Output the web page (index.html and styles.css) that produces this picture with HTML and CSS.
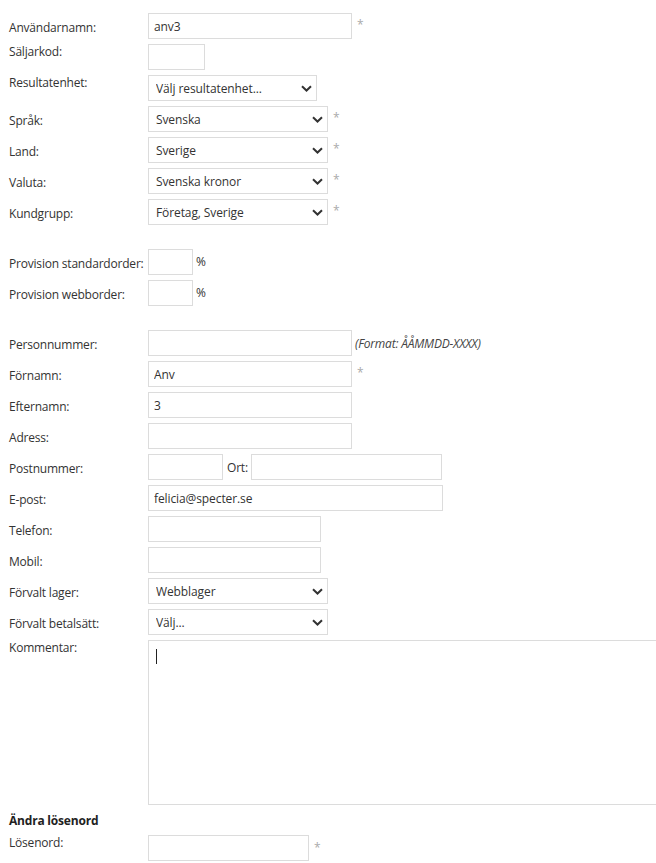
FILE: index.html
```html
<!DOCTYPE html>
<html lang="sv">
<head>
    <meta charset="UTF-8">
    <meta name="viewport" content="width=device-width, initial-scale=1.0">
    <title>Redigera användare</title>
    <link rel="stylesheet" href="styles.css">
</head>
<body>
    <form class="user-form">
        <div class="row">
            <label>Användarnamn:</label>
            <input type="text" class="w-wide" value="anv3">
            <span class="req">*</span>
        </div>
        <div class="row top">
            <label>Säljarkod:</label>
            <input type="text" class="w-code">
        </div>
        <div class="row top">
            <label>Resultatenhet:</label>
            <span class="select-wrap">
                <select class="w-unit"><option>Välj resultatenhet...</option></select>
                <svg class="chevron" width="11" height="7" viewBox="0 0 11 7"><path d="M1 1.2l4.5 4.3 4.5-4.3" fill="none" stroke="#333" stroke-width="2"/></svg>
            </span>
        </div>
        <div class="row">
            <label>Språk:</label>
            <span class="select-wrap">
                <select class="w-select"><option>Svenska</option></select>
                <svg class="chevron" width="11" height="7" viewBox="0 0 11 7"><path d="M1 1.2l4.5 4.3 4.5-4.3" fill="none" stroke="#333" stroke-width="2"/></svg>
            </span>
            <span class="req">*</span>
        </div>
        <div class="row">
            <label>Land:</label>
            <span class="select-wrap">
                <select class="w-select"><option>Sverige</option></select>
                <svg class="chevron" width="11" height="7" viewBox="0 0 11 7"><path d="M1 1.2l4.5 4.3 4.5-4.3" fill="none" stroke="#333" stroke-width="2"/></svg>
            </span>
            <span class="req">*</span>
        </div>
        <div class="row">
            <label>Valuta:</label>
            <span class="select-wrap">
                <select class="w-select"><option>Svenska kronor</option></select>
                <svg class="chevron" width="11" height="7" viewBox="0 0 11 7"><path d="M1 1.2l4.5 4.3 4.5-4.3" fill="none" stroke="#333" stroke-width="2"/></svg>
            </span>
            <span class="req">*</span>
        </div>
        <div class="row">
            <label>Kundgrupp:</label>
            <span class="select-wrap">
                <select class="w-select"><option>Företag, Sverige</option></select>
                <svg class="chevron" width="11" height="7" viewBox="0 0 11 7"><path d="M1 1.2l4.5 4.3 4.5-4.3" fill="none" stroke="#333" stroke-width="2"/></svg>
            </span>
            <span class="req">*</span>
        </div>

        <div class="spacer"></div>

        <div class="row">
            <label>Provision standardorder:</label>
            <input type="text" class="w-pct">
            <span class="unit">%</span>
        </div>
        <div class="row">
            <label>Provision webborder:</label>
            <input type="text" class="w-pct">
            <span class="unit">%</span>
        </div>

        <div class="spacer"></div>

        <div class="row">
            <label>Personnummer:</label>
            <input type="text" class="w-wide">
            <span class="hint">(Format: ÅÅMMDD-XXXX)</span>
        </div>
        <div class="row">
            <label>Förnamn:</label>
            <input type="text" class="w-wide" value="Anv">
            <span class="req">*</span>
        </div>
        <div class="row">
            <label>Efternamn:</label>
            <input type="text" class="w-wide" value="3">
        </div>
        <div class="row">
            <label>Adress:</label>
            <input type="text" class="w-wide">
        </div>
        <div class="row">
            <label>Postnummer:</label>
            <input type="text" class="w-zip">
            <span class="inline-label">Ort:</span>
            <input type="text" class="w-city">
        </div>
        <div class="row">
            <label>E-post:</label>
            <input type="text" class="w-mail" value="felicia@specter.se">
        </div>
        <div class="row">
            <label>Telefon:</label>
            <input type="text" class="w-phone">
        </div>
        <div class="row">
            <label>Mobil:</label>
            <input type="text" class="w-phone">
        </div>
        <div class="row">
            <label>Förvalt lager:</label>
            <span class="select-wrap">
                <select class="w-select"><option>Webblager</option></select>
                <svg class="chevron" width="11" height="7" viewBox="0 0 11 7"><path d="M1 1.2l4.5 4.3 4.5-4.3" fill="none" stroke="#333" stroke-width="2"/></svg>
            </span>
        </div>
        <div class="row">
            <label>Förvalt betalsätt:</label>
            <span class="select-wrap">
                <select class="w-select"><option>Välj...</option></select>
                <svg class="chevron" width="11" height="7" viewBox="0 0 11 7"><path d="M1 1.2l4.5 4.3 4.5-4.3" fill="none" stroke="#333" stroke-width="2"/></svg>
            </span>
        </div>
        <div class="row top">
            <label>Kommentar:</label>
            <span class="area-wrap">
                <textarea class="comment"></textarea>
                <span class="caret"></span>
            </span>
        </div>

        <h4>Ändra lösenord</h4>
        <div class="row top">
            <label>Lösenord:</label>
            <input type="password" class="w-pass">
            <span class="req">*</span>
        </div>
    </form>
</body>
</html>
```

FILE: styles.css
```css
html, body {
    overflow-x: hidden;
}
body {
    margin: 0;
    font-family: "Open Sans", Arial, sans-serif;
    font-size: 12px;
    letter-spacing: -0.2px;
    color: #333;
    background-color: #fff;
}
.user-form {
    padding: 13px 0 0 9px;
}
.row {
    display: flex;
    align-items: center;
    margin-bottom: 5px;
}
.row.top {
    align-items: flex-start;
}
.row label {
    width: 139px;
    flex-shrink: 0;
    line-height: 16px;
    padding-top: 4px;
    white-space: nowrap;
}
.row.top label {
    padding-top: 0;
}
input, select, textarea {
    box-sizing: border-box;
    height: 26px;
    border: 1px solid #dcdcdc;
    font-family: "Open Sans", Arial, sans-serif;
    font-size: 12px;
    letter-spacing: -0.1px;
    color: #333;
    background-color: #fff;
    margin: 0;
    flex-shrink: 0;
}
input {
    padding: 0 5px;
}
select {
    appearance: none;
    -webkit-appearance: none;
    padding: 0 24px 0 7px;
    border-radius: 0;
}
.select-wrap {
    position: relative;
    display: flex;
}
.chevron {
    position: absolute;
    right: 5px;
    top: 10px;
    pointer-events: none;
}
.w-wide { width: 204px; }
.w-code { width: 57px; }
.w-unit { width: 169px; }
.w-select { width: 180px; }
.w-pct { width: 45px; }
.w-zip { width: 75px; }
.w-city { width: 191px; }
.w-mail { width: 295px; }
.w-phone { width: 173px; }
.w-pass { width: 161px; }
.req {
    color: #aaa;
    margin-left: 5px;
    align-self: flex-start;
    line-height: 24px;
}
.row.top .req {
    line-height: 26px;
}
.unit {
    margin-left: 3px;
    align-self: flex-start;
    line-height: 25px;
}
.hint {
    font-style: italic;
    color: #444;
    margin-left: 3px;
}
.inline-label {
    margin: 0 3px 0 4px;
}
.spacer {
    height: 19px;
}
.area-wrap {
    position: relative;
    display: flex;
}
.comment {
    width: 520px;
    height: 165px;
    resize: none;
    padding: 5px 7px;
}
.caret {
    position: absolute;
    left: 8px;
    top: 9px;
    width: 1px;
    height: 15px;
    background-color: #222;
}
h4 {
    margin: 8px 0 6px;
    font-size: 12px;
    font-weight: bold;
    color: #222;
    line-height: 16px;
}
```
